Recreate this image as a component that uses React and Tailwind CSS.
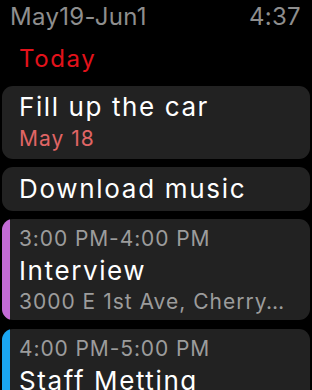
export default function App() {
  return (
    <div className="w-[312px] h-[390px] bg-black overflow-hidden font-['Inter',sans-serif] antialiased">
      <div className="flex justify-between items-start pl-[10px] pr-[11px] pt-[2px] h-[38px] text-[24px] leading-[30px] text-[#8e8e8e] tracking-[0.3px]">
        <span>May19-Jun1</span>
        <span>4:37</span>
      </div>
      <div className="pl-[19px] h-[48px] pt-[6px] text-[24px] leading-[30px] text-[#e3121b] tracking-[1.6px]">Today</div>
      <div className="flex flex-col gap-[8px] px-[2px]">
        <div className="rounded-[11px] bg-[#222222] h-[73px] pl-[17px] pt-[5px]">
          <div className="text-[26px] leading-[32px] text-white tracking-[1.6px]">Fill up the car</div>
          <div className="mt-[2px] text-[21px] leading-[28px] text-[#e06565] tracking-[1px]">May 18</div>
        </div>
        <div className="rounded-[11px] bg-[#222222] h-[44px] pl-[17px] pt-[6px]">
          <div className="text-[26px] leading-[32px] text-white tracking-[1.7px]">Download music</div>
        </div>
        <div className="rounded-[11px] bg-[#222222] h-[101px] flex overflow-hidden">
          <div className="w-[8px] bg-[#c36bd6] shrink-0" />
          <div className="pl-[9px] pt-[5px] min-w-0 pr-[20px]">
            <div className="text-[21px] leading-[30px] text-[#9c9c9c] tracking-[0.9px]">3:00 PM-4:00 PM</div>
            <div className="text-[26px] leading-[34px] text-white tracking-[1.6px]">Interview</div>
            <div className="text-[21px] leading-[28px] text-[#9c9c9c] tracking-[1px] whitespace-nowrap">3000 E 1st Ave, Cherry…</div>
          </div>
        </div>
        <div className="mt-[1px] rounded-[11px] bg-[#222222] h-[101px] flex overflow-hidden">
          <div className="w-[8px] bg-[#1aa6f2] shrink-0" />
          <div className="pl-[9px] pt-[5px] min-w-0">
            <div className="text-[21px] leading-[30px] text-[#9c9c9c] tracking-[0.9px]">4:00 PM-5:00 PM</div>
            <div className="text-[26px] leading-[34px] text-white tracking-[1.6px]">Staff Metting</div>
          </div>
        </div>
      </div>
    </div>
  );
}
